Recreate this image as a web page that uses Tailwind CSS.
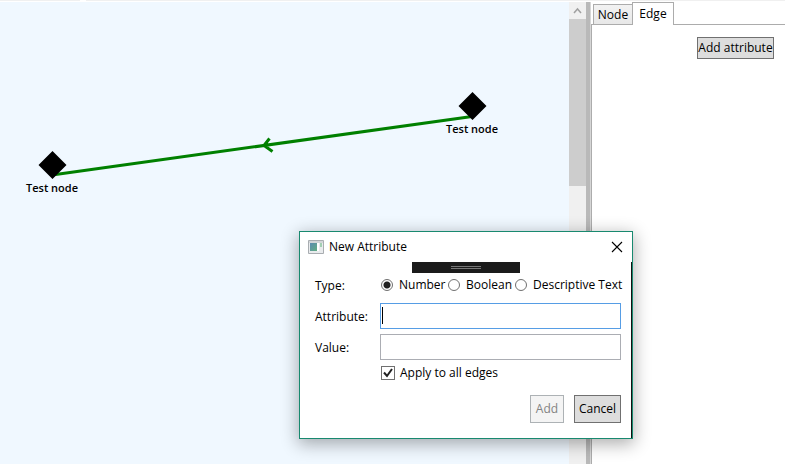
<!DOCTYPE html>
<html lang="en">
<head>
<meta charset="utf-8">
<title>Graph editor</title>
<script src="https://cdn.jsdelivr.net/npm/@tailwindcss/browser@4"></script>
</head>
<body class="relative flex h-screen flex-col overflow-hidden bg-white font-['Segoe_UI','Open_Sans',sans-serif] text-[12px] leading-4 text-black">
  <div class="flex h-px shrink-0 bg-[#f0f0f0]"><span class="ml-[80px] w-[6px] bg-white"></span></div>
  <main class="mt-px flex min-h-0 flex-1">
    <!-- Graph canvas -->
    <section class="relative min-w-0 flex-1 overflow-hidden bg-[#f0f8ff]" aria-label="Graph">
      <svg class="absolute top-0 left-0 h-[200px] w-[569px]" viewBox="0 2 569 200" aria-hidden="true">
        <path d="M52 175 472 116.500M269.500 138.500 264 145.500 272.500 151.500" fill="none" stroke="#008000" stroke-width="3"/>
        <path d="M52.500 151 66.500 165 52.500 179 38.500 165ZM472.500 92 486.500 106 472.500 120 458.500 106Z"/>
      </svg>
      <span class="absolute top-[178px] left-[2px] w-[100px] text-center text-[11px] font-semibold">Test node</span>
      <span class="absolute top-[119px] left-[422px] w-[100px] text-center text-[11px] font-semibold">Test node</span>
    </section>
    <!-- Scrollbar -->
    <div class="flex w-[17px] shrink-0 flex-col bg-[#f0f0f0]">
      <button class="flex h-[17px] items-center justify-center" aria-label="Scroll up">
        <svg class="h-2 w-[9px]" viewBox="0 0 9 8" fill="none" stroke="#a0a0a0" stroke-width="1.500"><path d="M1 6 4.500 2 8 6"/></svg>
      </button>
      <div class="h-[167px] bg-[#cdcdcd]"></div>
    </div>
    <div class="w-[5px] shrink-0 border-r border-[#d6d6d6] bg-[#b9b9b9]"></div>
    <!-- Side panel -->
    <aside class="flex w-[194px] shrink-0 flex-col">
      <div class="flex h-[23px] items-end border-b border-[#acacac] pl-[2px]" role="tablist">
        <button role="tab" aria-selected="false" class="h-[20px] w-10 border border-b-0 border-[#acacac] bg-linear-to-b from-[#f2f2f2] to-[#e8e8e8]">Node</button>
        <button role="tab" aria-selected="true" class="relative top-px -ml-px h-[23px] w-[42px] border border-b-0 border-[#acacac] bg-white">Edge</button>
      </div>
      <div class="flex flex-1 items-start justify-end border-l border-[#acacac] pt-3 pr-[11px]">
        <button class="h-[22px] w-[77px] border border-[#707070] bg-[#dddddd] whitespace-nowrap">Add attribute</button>
      </div>
    </aside>
  </main>

  <!-- New Attribute window -->
  <form role="dialog" aria-labelledby="title" class="absolute top-[231px] left-[299px] w-[334px] border border-[#18896f] bg-white shadow-[0_4px_16px_1px_rgba(0,0,0,0.32)]">
    <header class="flex h-[30px] items-center pr-[9px] pl-2">
      <svg class="h-[14px] w-4" viewBox="0 0 16 14" aria-hidden="true">
        <defs><linearGradient id="pane" x2="1" y2="1"><stop stop-color="#5b8bb0"/><stop offset="1" stop-color="#62ad82"/></linearGradient></defs>
        <path d="M.5.500h15v13H.5Z" fill="#e9ebed" stroke="#a9adb1"/><path d="M1 1h14v2H1Z" fill="#d2d5d8"/>
        <path d="M2 3h7v8H2Z" fill="url(#pane)"/><path d="M9 3h2v8H9Z" fill="#fff"/><path d="M12 3h2v4h-2Z" fill="#a2cfb2"/>
      </svg>
      <h1 id="title" class="ml-[5px] flex-1">New Attribute</h1>
      <button type="button" aria-label="Close">
        <svg class="h-3 w-3" viewBox="0 0 12 12" fill="none" stroke="#000" stroke-width="1.100"><path d="m1 1 10 10M11 1 1 11"/></svg>
      </button>
    </header>
    <div class="border-r border-[#111]">
      <div class="ml-28 flex h-[11px] w-27 items-center justify-center bg-[#1b1b1b]"><span class="h-[3px] w-[30px] border-y border-[#777]"></span></div>
      <div class="grid grid-cols-[65px_minmax(0,1fr)] items-center gap-y-[5px] pr-[10px] pb-[15px] pl-[15px]">
        <span>Type:</span>
        <div class="flex h-[25px] items-center pb-[2px] pl-px whitespace-nowrap" role="radiogroup" aria-label="Type">
          <input id="number" name="type" type="radio" checked class="size-3 shrink-0 appearance-none rounded-full border border-[#707070] bg-white checked:bg-[radial-gradient(circle,#212121_3px,transparent_4px)]">
          <label for="number" class="w-[55px] shrink-0 pl-[6px]">Number</label>
          <input id="boolean" name="type" type="radio" class="size-3 shrink-0 appearance-none rounded-full border border-[#707070] bg-white">
          <label for="boolean" class="w-[55px] shrink-0 pl-[6px]">Boolean</label>
          <input id="text" name="type" type="radio" class="size-3 shrink-0 appearance-none rounded-full border border-[#707070] bg-white">
          <label for="text" class="shrink-0 pl-[6px]">Descriptive Text</label>
        </div>
        <label for="attribute" class="pt-[2px]">Attribute:</label>
        <div class="relative flex">
          <input id="attribute" type="text" class="h-[26px] w-full border border-[#569de5] bg-white px-1 outline-none">
          <span class="absolute top-1 left-[2px] h-[17px] w-px bg-black"></span>
        </div>
        <label for="value" class="pt-[2px]">Value:</label>
        <input id="value" type="text" class="h-[26px] w-full border border-[#abadb3] bg-white px-1 outline-none">
        <div class="col-start-2 flex h-4 items-center pl-px">
          <span class="relative flex size-[14px]">
            <input id="all" type="checkbox" checked class="size-[14px] appearance-none border border-[#707070] bg-white">
            <svg class="pointer-events-none absolute inset-0 size-[14px]" viewBox="0 0 14 14" fill="none" stroke="#212121" stroke-width="2"><path d="m3 6.500 3 3.500 5-7"/></svg>
          </span>
          <label for="all" class="pl-[5px]">Apply to all edges</label>
        </div>
        <div class="col-span-2 mt-[9px] flex justify-end gap-[10px]">
          <button type="submit" disabled class="h-7 w-[34px] border border-[#adb2b5] bg-[#f4f4f4] text-[#838383]">Add</button>
          <button type="button" class="h-7 w-[47px] border border-[#707070] bg-[#dddddd]">Cancel</button>
        </div>
      </div>
    </div>
  </form>
</body>
</html>
